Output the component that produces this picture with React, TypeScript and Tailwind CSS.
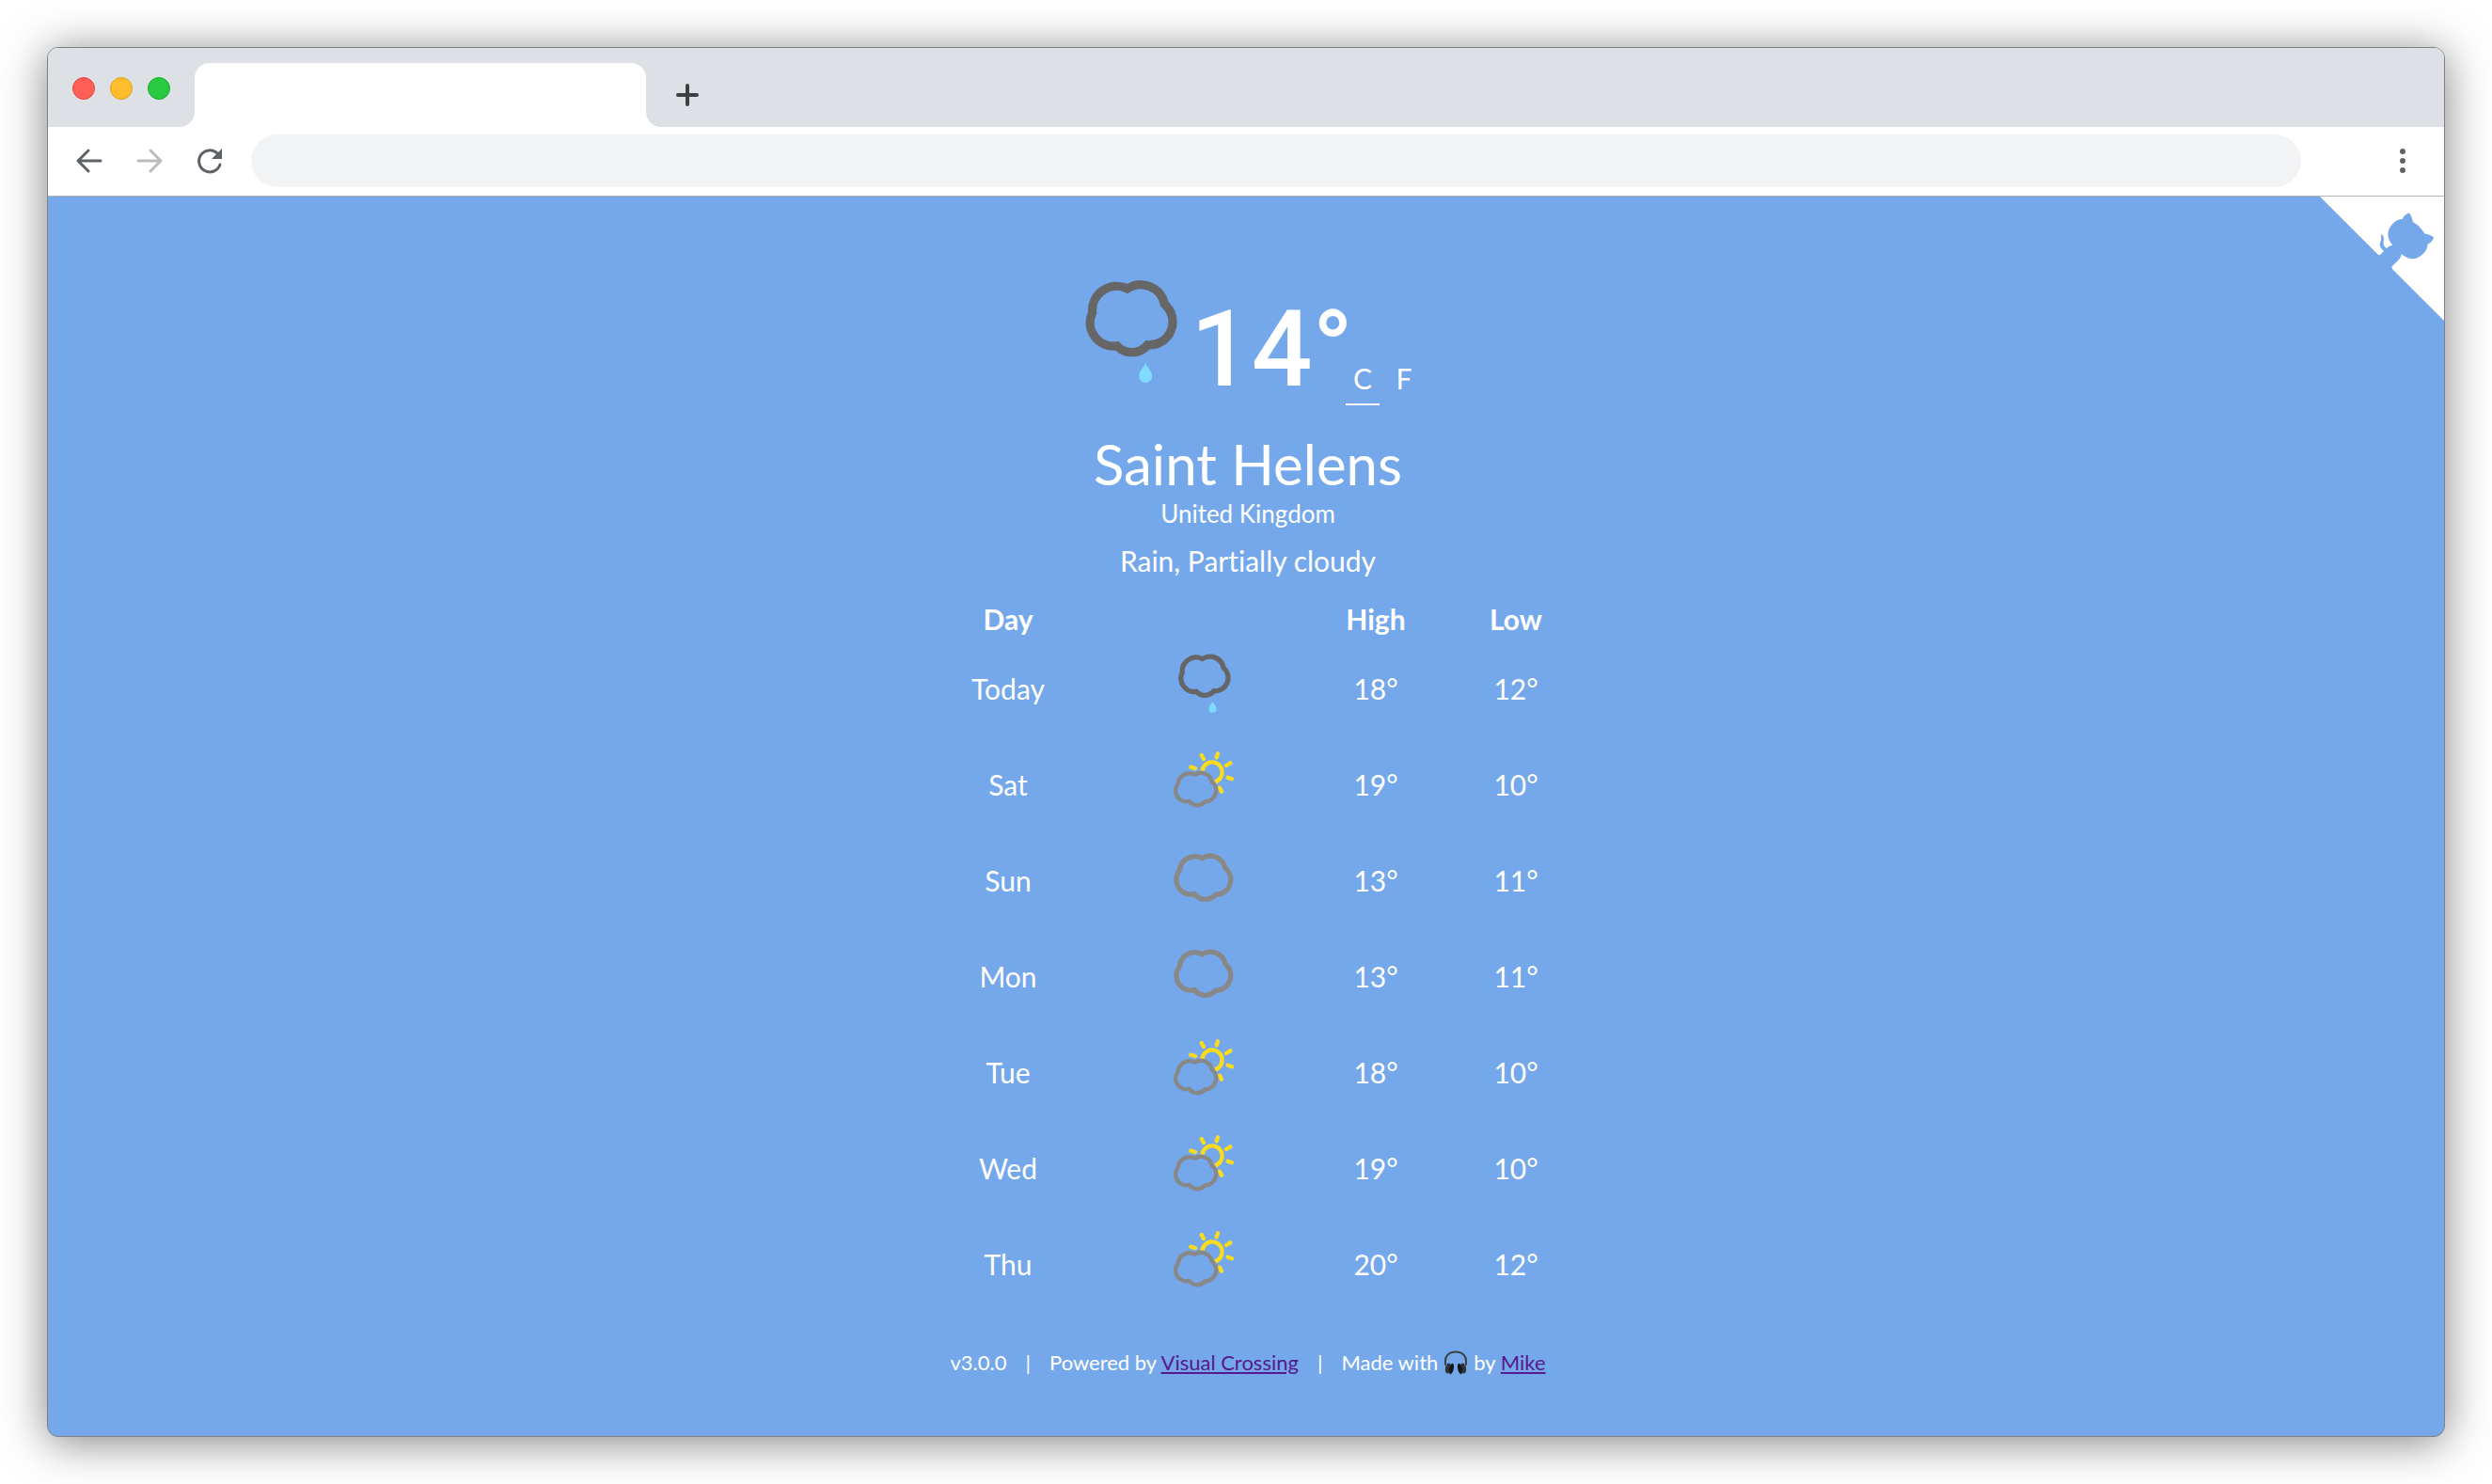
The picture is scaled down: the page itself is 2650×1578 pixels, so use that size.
import React, { useState } from "react";

type Sky = "rain" | "partly" | "cloud";

const days: { day: string; sky: Sky; high: number; low: number }[] = [
  { day: "Today", sky: "rain", high: 18, low: 12 },
  { day: "Sat", sky: "partly", high: 19, low: 10 },
  { day: "Sun", sky: "cloud", high: 13, low: 11 },
  { day: "Mon", sky: "cloud", high: 13, low: 11 },
  { day: "Tue", sky: "partly", high: 18, low: 10 },
  { day: "Wed", sky: "partly", high: 19, low: 10 },
  { day: "Thu", sky: "partly", high: 20, low: 12 },
];

function RainShape() {
  return (
    <g>
      <path
        d="M131 187A78 78 0 0 1 243 110A78 78 0 0 1 362 160A74 74 0 0 1 308 290A65 65 0 0 1 210 293A75 75 0 0 1 131 187Z"
        fill="none"
        stroke="#666"
        strokeWidth="28"
      />
      <path d="M301 346C306 364 322 371 322 390A21 21 0 0 1 280 390C280 371 296 364 301 346Z" fill="#7fdbff" />
    </g>
  );
}

const cloudPath =
  "M103 740A49 49 0 0 1 175 701A49 49 0 0 1 249 732A48 48 0 0 1 218 817A43 43 0 0 1 151 815A47 47 0 0 1 103 740Z";

function SkyIcon({ sky }: { sky: Sky }) {
  if (sky === "rain")
    return (
      <svg viewBox="30 6 300 306" className="mx-auto block h-[102px] w-[100px]" role="img" aria-label="Rain">
        <g transform="translate(37 2) scale(0.57)">
          <RainShape />
        </g>
      </svg>
    );
  if (sky === "cloud")
    return (
      <svg viewBox="30 618 300 306" className="mx-auto block h-[102px] w-[100px]" role="img" aria-label="Cloudy">
        <path d={cloudPath} fill="none" stroke="#888" strokeWidth="16" />
      </svg>
    );
  return (
    <svg viewBox="30 312 300 306" className="mx-auto block h-[102px] w-[100px]" role="img" aria-label="Partly cloudy">
      <g fill="none" stroke="#fbdb1d" strokeWidth="13">
        <path d="M175 424A32 32 0 1 1 216 457" />
        <path
          strokeLinecap="round"
          d="M139 410L153 414M173 372L180 384M225 367L221 379M252 405L265 397M257 443L270 448M231 476L237 488"
        />
      </g>
      <path
        d={cloudPath}
        transform="translate(21.6 -86.7) scale(0.743)"
        fill="none"
        stroke="#888"
        strokeWidth="18"
      />
    </svg>
  );
}

function Headphones() {
  return (
    <svg viewBox="0 0 26 26" className="mx-1.5 inline-block size-[26px] align-[-5px]" role="img" aria-label="headphones">
      <path d="M2.500 16C0 6 6 1.500 13 1.500S26 6 23.500 16" fill="none" stroke="#3a4248" strokeWidth="2" />
      <ellipse cx="5" cy="19" rx="3" ry="5.500" transform="rotate(12 5 19)" fill="#2f3437" />
      <ellipse cx="21" cy="19" rx="3" ry="5.500" transform="rotate(-12 21 19)" fill="#2f3437" />
      <ellipse cx="8.500" cy="19.500" rx="2.300" ry="5.800" transform="rotate(12 8.500 19.500)" fill="#15181a" />
      <ellipse cx="17.500" cy="19.500" rx="2.300" ry="5.800" transform="rotate(-12 17.500 19.500)" fill="#15181a" />
    </svg>
  );
}

function GithubCorner() {
  return (
    <a href="https://github.com" aria-label="View source on GitHub" className="absolute top-0 -right-[3px]">
      <svg viewBox="0 0 250 250" className="block size-[135px]" aria-hidden="true">
        <path d="M0,0 L115,115 L130,115 L142,142 L250,250 L250,0 Z" fill="#fff" />
        <path
          d="M128.3,109.0 C113.8,99.7 119.0,89.6 119.0,89.6 C122.0,82.7 120.5,78.6 120.5,78.6 C119.2,72.0 123.4,76.3 123.4,76.3 C127.3,80.9 125.5,87.3 125.5,87.3 C122.9,97.6 130.6,101.9 134.4,103.2"
          fill="#75a8eb"
        />
        <path
          transform="translate(130 125) scale(1.09) translate(-130 -125)"
          d="M115.0,115.0 C114.9,115.1 118.7,116.5 119.8,115.4 L133.7,101.6 C136.9,99.2 139.9,98.4 142.2,98.6 C133.8,88.0 127.5,74.4 143.8,58.0 C148.5,53.4 154.0,51.2 159.7,51.0 C160.3,49.4 163.2,43.6 171.4,40.1 C171.4,40.1 176.1,42.5 178.8,56.2 C183.1,58.6 187.2,61.8 190.9,65.4 C194.5,69.0 197.7,73.2 200.1,77.6 C213.8,80.2 216.3,84.9 216.3,84.9 C212.7,93.1 206.9,96.0 205.4,96.6 C205.1,102.4 203.0,107.8 198.3,112.5 C181.9,128.9 168.3,122.5 157.7,114.1 C157.9,116.9 156.7,120.9 152.7,124.9 L141.0,136.5 C139.8,137.7 141.6,141.9 141.8,141.8 Z"
          fill="#75a8eb"
        />
      </svg>
    </a>
  );
}

function BrowserBar() {
  return (
    <header className="border-b border-[#b3b3b3] bg-white">
      <div className="flex h-[84px]">
        <div className="flex w-[156px] shrink-0 items-center gap-4 rounded-br-2xl bg-[#dde0e5] pt-0.5 pl-[26px]">
          <button aria-label="Close" className="size-6 rounded-full border border-[#e2463f] bg-[#ff5f57]" />
          <button aria-label="Minimise" className="size-6 rounded-full border border-[#e1a116] bg-[#ffbd2e]" />
          <button aria-label="Zoom" className="size-6 rounded-full border border-[#12ac28] bg-[#28ca42]" />
        </div>
        <div className="flex w-[480px] shrink-0 items-end bg-linear-to-b from-[#dde0e5] from-50% to-white to-50%">
          <button aria-label="Current tab" className="h-[68px] w-full rounded-t-2xl bg-white" />
        </div>
        <div className="flex flex-1 items-center rounded-bl-2xl bg-[#dde0e5] pt-4 pl-8">
          <button aria-label="New tab">
            <svg viewBox="0 0 24 24" className="block size-6" aria-hidden="true">
              <path d="M12 2V22M2 12H22" stroke="#3c4043" strokeWidth="4" strokeLinecap="round" />
            </svg>
          </button>
        </div>
      </div>
      <div className="flex h-[73px] items-center pr-[39px] pb-0.5 pl-[29px]">
        <button aria-label="Back">
          <svg viewBox="0 0 30 30" className="block size-[30px]" aria-hidden="true">
            <path d="M14 4L3 15L14 26M3 15H27" fill="none" stroke="#5f6368" strokeWidth="3" strokeLinecap="round" strokeLinejoin="round" />
          </svg>
        </button>
        <button aria-label="Forward" className="ml-[34px]">
          <svg viewBox="0 0 30 30" className="block size-[30px]" aria-hidden="true">
            <path d="M16 4L27 15L16 26M3 15H27" fill="none" stroke="#babcbe" strokeWidth="3" strokeLinecap="round" strokeLinejoin="round" />
          </svg>
        </button>
        <button aria-label="Reload" className="ml-[34px]">
          <svg viewBox="0 0 30 30" className="block size-[30px]" aria-hidden="true">
            <path d="M26 19A11.500 11.500 0 1 1 23 7" fill="none" stroke="#5f6368" strokeWidth="3" strokeLinecap="round" />
            <path d="M28 2V13H17Z" fill="#5f6368" />
          </svg>
        </button>
        <input
          aria-label="Address"
          className="ml-[29px] h-14 min-w-0 flex-1 rounded-full bg-[#f1f3f4] px-8 text-2xl text-[#3c4043] outline-none"
        />
        <button aria-label="Menu" className="ml-[103px]">
          <svg viewBox="0 0 10 30" className="block h-[30px] w-[10px]" fill="#5f6368" aria-hidden="true">
            <circle cx="5" cy="5" r="3" />
            <circle cx="5" cy="15" r="3" />
            <circle cx="5" cy="25" r="3" />
          </svg>
        </button>
      </div>
    </header>
  );
}

export default function App() {
  const [unit, setUnit] = useState<"C" | "F">("C");
  const show = (c: number) => `${unit === "C" ? c : Math.round((c * 9) / 5 + 32)}°`;

  return (
    <div className="flex min-h-screen flex-col bg-white p-[50px] font-[Lato,sans-serif] [font-variant-ligatures:none]">
      <div className="flex flex-1 flex-col overflow-hidden rounded-xl border border-[#808080] bg-[#75a8eb] shadow-[0_5px_48px_rgba(0,0,0,0.5)]">
        <BrowserBar />
        <main className="relative flex flex-1 flex-col items-center text-[30px] leading-[38px] text-white">
          <GithubCorner />
          <section className="flex w-full flex-col items-center pt-[88px] pl-1">
            <div className="flex h-[134px] items-start pl-2">
              <svg viewBox="100 80 308 340" className="block h-[113px] w-[103px]" role="img" aria-label="Rain">
                <RainShape />
              </svg>
              <p className="-mr-2 ml-3 font-[Roboto,sans-serif] text-[114px] leading-[148px] font-medium">{show(14)}</p>
              <div className="flex self-end">
                {(["C", "F"] as const).map((u) => (
                  <button
                    key={u}
                    onClick={() => setUnit(u)}
                    aria-pressed={unit === u}
                    className="h-[49px] w-9 cursor-pointer border-b-2 border-transparent pb-2 first:mr-2 aria-pressed:border-white"
                  >
                    {u}
                  </button>
                ))}
              </div>
            </div>
            <h1 className="mt-6 text-[60px] leading-[76px]">Saint Helens</h1>
            <p className="text-[26px] leading-[30px]">United Kingdom</p>
            <p className="mt-4">Rain, Partially cloudy</p>
          </section>
          <table className="mt-6 w-[714px] max-w-full table-fixed text-center">
            <thead>
              <tr>
                <th scope="col" className="w-[208px] pb-1">Day</th>
                <th scope="col" className="w-[208px] pb-1" aria-label="Conditions" />
                <th scope="col" className="w-[158px] pb-1">High</th>
                <th scope="col" className="w-[140px] pb-1">Low</th>
              </tr>
            </thead>
            <tbody>
              {days.map((d) => (
                <tr key={d.day}>
                  <td>{d.day}</td>
                  <td>
                    <SkyIcon sky={d.sky} />
                  </td>
                  <td>{show(d.high)}</td>
                  <td>{show(d.low)}</td>
                </tr>
              ))}
            </tbody>
          </table>
          <footer className="mt-[38px] flex gap-5 pb-12 pl-1 text-[22px] leading-8">
            <span>v3.0.0</span>
            <span>|</span>
            <span>
              Powered by{" "}
              <a href="https://www.visualcrossing.com" className="text-[#551a8b] underline">
                Visual Crossing
              </a>
            </span>
            <span>|</span>
            <span>
              Made with
              <Headphones />
              by{" "}
              <a href="https://github.com" className="text-[#551a8b] underline">
                Mike
              </a>
            </span>
          </footer>
        </main>
      </div>
    </div>
  );
}
